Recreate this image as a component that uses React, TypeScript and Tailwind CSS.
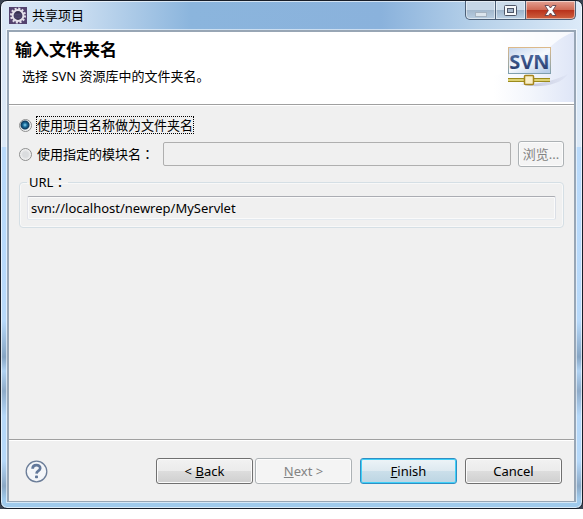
import { useState } from "react";

const buttonBase =
  "h-[26px] rounded-[3px] border text-[13px] leading-none flex items-center justify-center whitespace-pre";
const normalButton =
  "border-[#707070] bg-[linear-gradient(#f2f2f2_0%,#ebebeb_50%,#dddddd_50%,#cfcfcf_100%)] text-black shadow-[inset_0_0_0_1px_#fbfbfb]";
const disabledButton = "border-[#adb2b5] bg-[#f4f4f4] text-[#838383] shadow-[inset_0_0_0_1px_#fcfcfc]";
const defaultButton =
  "border-[#2f8fc4] bg-[linear-gradient(#edf4f8_0%,#dde9f0_50%,#cbdfea_50%,#bcd5e3_100%)] text-black shadow-[inset_0_0_0_1px_#3fd0f8]";

function AppIcon() {
  return (
    <svg width="18" height="17" viewBox="0 0 18 17" aria-hidden="true">
      <rect width="18" height="17" fill="#54436f" />
      <circle cx="9" cy="8.5" r="6.8" fill="none" stroke="#e4e0ea" strokeWidth="2.4" strokeDasharray="2 1.56" />
      <circle cx="9" cy="8.5" r="5.4" fill="#37304f" stroke="#e4e0ea" strokeWidth="2" />
      <path d="M5.2 7.2h7.600M5 9h8M5.600 10.800h6.800" stroke="#5d5685" strokeWidth="0.8" />
    </svg>
  );
}

function Colon() {
  return <span className="font-['Noto_Sans_CJK_TC',sans-serif]">：</span>;
}

function SvnBanner() {
  return (
    <svg width="80" height="70" viewBox="0 0 80 70" aria-hidden="true">
      <defs>
        <linearGradient id="wash" x1="0" y1="0" x2="1" y2="0">
          <stop offset="0" stopColor="#ffffff" />
          <stop offset="0.45" stopColor="#f3f6fc" />
          <stop offset="1" stopColor="#dfe6f7" />
        </linearGradient>
        <linearGradient id="card" x1="0" y1="0" x2="0.8" y2="1">
          <stop offset="0" stopColor="#c3d5ee" />
          <stop offset="0.55" stopColor="#f6f9fd" />
          <stop offset="1" stopColor="#b9cfe9" />
        </linearGradient>
        <linearGradient id="cardEdge" x1="0" y1="0" x2="0" y2="1">
          <stop offset="0" stopColor="#dcb98a" />
          <stop offset="1" stopColor="#7f9fae" />
        </linearGradient>
        <linearGradient id="letters" x1="0" y1="0" x2="0" y2="1">
          <stop offset="0" stopColor="#5878ac" />
          <stop offset="1" stopColor="#1d2f63" />
        </linearGradient>
        <linearGradient id="shade" x1="0" y1="0" x2="1" y2="0">
          <stop offset="0" stopColor="#b9bdd6" />
          <stop offset="1" stopColor="#b9bdd6" stopOpacity="0.1" />
        </linearGradient>
      </defs>
      <rect width="80" height="70" fill="url(#wash)" />
      <path d="M0 0H80C66 5 56 14 46 26C30 40 12 40 0 44Z" fill="#ffffff" opacity="0.75" />
      <path d="M26 52C44 54 64 47 74 42C68 51 54 55 36 54Z" fill="url(#shade)" />
      <rect x="14.500" y="15.500" width="42" height="26" fill="url(#card)" stroke="url(#cardEdge)" />
      <text
        x="35.500"
        y="37"
        textAnchor="middle"
        fontFamily="'Open Sans', 'Noto Sans', sans-serif"
        fontWeight="700"
        fontSize="20"
        fill="url(#letters)"
      >
        SVN
      </text>
      <path d="M14 48H56" stroke="#9b8b1c" strokeWidth="4" />
      <path d="M14 48H56" stroke="#f3e88f" strokeWidth="1.600" />
      <rect x="30.500" y="43.500" width="9" height="9" rx="1" fill="#f9efc9" stroke="#a5851b" strokeWidth="1.500" />
    </svg>
  );
}

function WindowControls() {
  const pane = "h-[19px] flex items-center justify-center border-[#4c6078] shadow-[inset_0_0_0_1px_#ffffff80]";
  return (
    <div className="flex">
      <button
        aria-label="Minimize"
        className={`${pane} w-[31px] rounded-bl-[5px] border-x border-b bg-[linear-gradient(#c6d6e6_50%,#a2b7cc_50%,#b9cee2)]`}
      >
        <svg width="12" height="5" viewBox="0 0 12 5" className="mt-2">
          <rect x="0.500" y="0.500" width="11" height="4" fill="#dce5ed" stroke="#a5b2c0" />
        </svg>
      </button>
      <button
        aria-label="Maximize"
        className={`${pane} w-[29px] border-b bg-[linear-gradient(#cbdbea_50%,#9cb3ca_50%,#bdd2e6)]`}
      >
        <svg width="13" height="11" viewBox="0 0 13 11">
          <rect x="0.500" y="0.500" width="12" height="10" rx="1" fill="#f7f9fb" stroke="#4e5668" />
          <rect x="3.500" y="3.500" width="6" height="4" fill="#a5b6cb" stroke="#4e5668" />
        </svg>
      </button>
      <button
        aria-label="Close"
        className={`${pane} w-[51px] rounded-br-[5px] border-x border-b bg-[linear-gradient(#e3a193_0%,#cf6a55_48%,#b8301a_50%,#cf6140_100%)]`}
      >
        <svg width="13" height="11" viewBox="0 0 13 11">
          <path
            d="M1 0.500H4.500L6.500 3L8.500 0.500H12L8.700 5.500L12 10.500H8.500L6.500 8L4.500 10.500H1L4.300 5.500Z"
            fill="#ffffff"
            stroke="#5c4450"
            strokeWidth="0.900"
          />
        </svg>
      </button>
    </div>
  );
}

export default function App() {
  const [mode, setMode] = useState("project");
  const radio =
    "appearance-none size-[13px] shrink-0 rounded-full border border-[#8e8f8f] bg-[radial-gradient(circle,#dadcde_35%,#f6f6f6_75%)] checked:bg-[radial-gradient(circle_at_5px_5px,#8fd8f5_0px,#1b6f9f_2px,#10385a_4px,#e8ecee_5px,#f6f6f6_6px)]";

  return (
    <div className="flex h-screen min-h-[420px] flex-col bg-white pb-[10px] font-['Noto_Sans','Noto_Sans_CJK_SC',sans-serif] text-[13px] text-black">
      <div className="flex flex-1 flex-col bg-[#3b4452]">
        <main className="flex flex-1 flex-col rounded-[7px] border border-[#171d28] bg-[linear-gradient(#e0edfa00_146px,#b9dafb_146px,#b7d9fa_320px,#86a5c4_356px,#b0d2f2_370px,#8eabc9_390px,#b5d8f9_415px,#b5d8f9_460px,#8ba8c5_485px,#9fcaec_498px),linear-gradient(90deg,#dce9f7_0px,#c8dcf0_80px,#8bb5dd_190px,#8ab2dc_380px,#b8d2ea_480px,#dceaf8_100%)] px-[6px] pb-[6px] shadow-[inset_0_0_0_1px_#ffffffa0]">
          <header className="flex h-[29px] items-start justify-between">
            <div className="flex items-center gap-[5px] pt-[5px] pl-[2px]">
              <AppIcon />
              <h1 className="text-[13px] leading-[18px]">共享项目</h1>
            </div>
            <WindowControls />
          </header>

          <div className="flex flex-1 flex-col border-2 border-b border-[#98a6b5] bg-[#f0f0f0] shadow-[0_0_0_1px_#ffffff90]">
            <section className="flex justify-between border-b border-[#a0a0a0] bg-white">
              <div className="pt-[6px] pl-[6px]">
                <h2 className="text-[17px] leading-[24px] font-bold">输入文件夹名</h2>
                <p className="pt-[4px] pl-[7px] leading-[20px]">选择 SVN 资源库中的文件夹名。</p>
              </div>
              <div className="pb-[2px]">
                <SvnBanner />
              </div>
            </section>

            <section className="flex-1 border-t border-white px-[10px] pt-[9px]">
              <div className="flex h-[20px] items-center gap-[4px]">
                <input
                  id="use-project"
                  type="radio"
                  name="folder"
                  className={radio}
                  checked={mode === "project"}
                  onChange={() => setMode("project")}
                />
                <label
                  htmlFor="use-project"
                  className="border border-dotted border-black leading-[16px]"
                >
                  使用项目名称做为文件夹名
                </label>
              </div>
              <div className="mt-[6px] flex h-[26px] items-center gap-[4px]">
                <input
                  id="use-module"
                  type="radio"
                  name="folder"
                  className={radio}
                  checked={mode === "module"}
                  onChange={() => setMode("module")}
                />
                <label htmlFor="use-module" className="w-[123px] shrink-0 pl-px">
                  使用指定的模块名
                  <Colon />
                </label>
                <input
                  aria-label="模块名"
                  disabled
                  className="h-[24px] min-w-0 flex-1 rounded-[2px] border border-[#afafaf] bg-[#f0f0f0] px-1"
                />
                <button disabled className={`${buttonBase} ${disabledButton} ml-[3px] w-[46px] shrink-0`}>
                  浏览...
                </button>
              </div>

              <fieldset className="mt-[6px] rounded-[4px] border border-[#d5dfe5] px-[7px] pb-[7px] shadow-[inset_0_0_0_1px_#f8f8f8]">
                <legend className="px-[2px] leading-[18px]">
                  <label htmlFor="url">
                    URL
                    <Colon />
                  </label>
                </legend>
                <input
                  id="url"
                  readOnly
                  value="svn://localhost/newrep/MyServlet"
                  className="mt-[5px] block h-[24px] w-full rounded-[2px] border border-t-[#abadb3] border-r-[#dbdfe6] border-b-[#e3e9ef] border-l-[#e2e3ea] bg-[#f0f0f0] px-[3px] shadow-[inset_0_0_0_1px_#fafafa]"
                />
              </fieldset>
            </section>

            <footer className="border-t border-[#a0a0a0]">
              <div className="flex items-center border-t border-white pt-[17px] pr-[12px] pb-[17px] pl-[16px]">
                <button aria-label="Help" className="mr-auto">
                  <svg width="23" height="23" viewBox="0 0 23 23">
                    <circle cx="11.500" cy="11.500" r="10.300" fill="#f4f6f9" stroke="#6b7d98" strokeWidth="1.300" />
                    <path
                      d="M7.600 8.700C7.700 3.900 15.300 4 15.200 8.300C15.100 11 11.600 10.800 11.500 13.600"
                      fill="none"
                      stroke="#62789a"
                      strokeWidth="2.700"
                    />
                    <rect x="10" y="15.400" width="3" height="2.800" rx="0.800" fill="#62789a" />
                  </svg>
                </button>
                <button className={`${buttonBase} ${normalButton} w-[97px]`}>
                  {"< "}
                  <span className="underline">B</span>ack
                </button>
                <button disabled className={`${buttonBase} ${disabledButton} ml-[2px] w-[97px]`}>
                  <span className="underline">N</span>
                  {"ext >"}
                </button>
                <button className={`${buttonBase} ${defaultButton} ml-[8px] w-[97px]`}>
                  <span className="underline">F</span>inish
                </button>
                <button className={`${buttonBase} ${normalButton} ml-[8px] w-[97px]`}>Cancel</button>
              </div>
            </footer>
          </div>
        </main>
      </div>
    </div>
  );
}
